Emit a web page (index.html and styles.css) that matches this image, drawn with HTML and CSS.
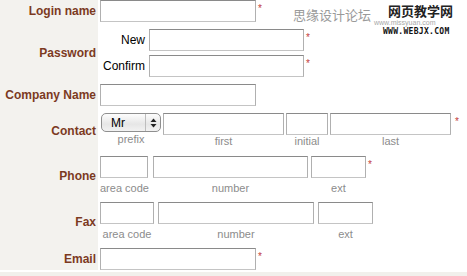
FILE: index.html
```html
<!DOCTYPE html>
<html lang="en">
<head>
    <meta charset="UTF-8">
    <title>Registration</title>
    <link rel="stylesheet" href="styles.css">
</head>
<body>
    <div class="watermark">
        <span class="wm-grey">思缘设计论坛</span>
        <span class="wm-small">www.missyuan.com</span>
        <span class="wm-dark">网页教学网</span>
        <span class="wm-url">WWW.WEBJX.COM</span>
    </div>

    <form class="form">
        <div class="row row-login">
            <div class="label">Login name</div>
            <div class="fields">
                <input class="box w156" type="text"><span class="req">*</span>
            </div>
        </div>

        <div class="row row-password">
            <div class="label">Password</div>
            <div class="sub">
                <div class="subrow">
                    <span class="sublabel">New</span>
                    <input class="box w155" type="password"><span class="req">*</span>
                </div>
                <div class="subrow">
                    <span class="sublabel">Confirm</span>
                    <input class="box w155" type="password"><span class="req">*</span>
                </div>
            </div>
        </div>

        <div class="row row-company">
            <div class="label">Company Name</div>
            <div class="fields">
                <input class="box w156" type="text">
            </div>
        </div>

        <div class="row row-contact">
            <div class="label">Contact</div>
            <div class="fields gap2">
                <div class="group">
                    <div class="select">
                        <span class="select-text">Mr</span>
                        <span class="select-arrows">
                            <svg width="7" height="10" viewBox="0 0 7 10">
                                <path d="M3.5 0.5 L6.5 4 L0.5 4 Z" fill="#222"/>
                                <path d="M0.5 6 L6.5 6 L3.5 9.5 Z" fill="#222"/>
                            </svg>
                        </span>
                    </div>
                    <span class="caption">prefix</span>
                </div>
                <div class="group">
                    <input class="box w121" type="text">
                    <span class="caption">first</span>
                </div>
                <div class="group">
                    <input class="box w42" type="text">
                    <span class="caption">initial</span>
                </div>
                <div class="group">
                    <input class="box w121" type="text">
                    <span class="caption">last</span>
                </div>
                <span class="req">*</span>
            </div>
        </div>

        <div class="row row-phone">
            <div class="label">Phone</div>
            <div class="fields">
                <div class="group">
                    <input class="box w48" type="text">
                    <span class="caption">area code</span>
                </div>
                <div class="group ml4">
                    <input class="box w155" type="text">
                    <span class="caption">number</span>
                </div>
                <div class="group ml3">
                    <input class="box w55" type="text">
                    <span class="caption">ext</span>
                </div>
                <span class="req">*</span>
            </div>
        </div>

        <div class="row row-fax">
            <div class="label">Fax</div>
            <div class="fields">
                <div class="group">
                    <input class="box w54" type="text">
                    <span class="caption">area code</span>
                </div>
                <div class="group ml4">
                    <input class="box w156" type="text">
                    <span class="caption">number</span>
                </div>
                <div class="group ml4">
                    <input class="box w55" type="text">
                    <span class="caption">ext</span>
                </div>
            </div>
        </div>

        <div class="row row-email">
            <div class="label">Email</div>
            <div class="fields">
                <input class="box w156" type="text"><span class="req">*</span>
            </div>
        </div>
    </form>
    <div class="bottom-strip"></div>
</body>
</html>
```

FILE: styles.css
```css
body {
    margin: 0;
    background-color: #fff;
    font-family: 'Liberation Sans', Arial, sans-serif;
    font-size: 12px;
    color: #000;
    overflow: hidden;
}

.form {
    margin: 0;
    background: linear-gradient(to right, #f3f2ee 98px, #fff 98px);
}

.row {
    display: flex;
    align-items: center;
}

.label {
    width: 98px;
    box-sizing: border-box;
    padding-right: 2px;
    text-align: right;
    font-weight: bold;
    color: #7c3a1f;
    flex-shrink: 0;
}

.fields {
    display: flex;
    align-items: flex-start;
    padding-left: 2px;
}

.gap2 {
    gap: 2px;
    padding-left: 3px;
}

.ml3 { margin-left: 3px; }
.ml4 { margin-left: 4px; }

.box {
    display: block;
    box-sizing: border-box;
    height: 22px;
    margin: 0;
    padding: 0 3px;
    border: 1px solid #c4c4c4;
    border-top-color: #8a8a8a;
    border-left-color: #b0b0b0;
    border-right-color: #b0b0b0;
    background: #fff;
    font-family: inherit;
    font-size: 12px;
}

.w42 { width: 42px; }
.w48 { width: 48px; }
.w54 { width: 54px; }
.w55 { width: 55px; }
.w121 { width: 121px; }
.w155 { width: 155px; }
.w156 { width: 156px; }

.req {
    color: #c23b3b;
    font-size: 10px;
    line-height: 10px;
    margin-left: 2px;
    align-self: flex-start;
    padding-top: 4px;
}

.row-password {
    margin-top: 7px;
}

.sub {
    display: flex;
    flex-direction: column;
    gap: 4px;
}

.subrow {
    display: flex;
    align-items: flex-start;
}

.sublabel {
    width: 47px;
    text-align: right;
    margin-right: 4px;
    line-height: 22px;
}

.row-company {
    margin-top: 7px;
}

.row-contact {
    margin-top: 7px;
}

.group {
    display: flex;
    flex-direction: column;
    align-items: center;
}

.caption {
    font-size: 11px;
    color: #8c8c8c;
    line-height: 13px;
}

.select {
    box-sizing: border-box;
    width: 60px;
    height: 19px;
    display: flex;
    align-items: center;
    border: 1px solid #8f8f8f;
    border-radius: 5px;
    background: linear-gradient(to bottom, #fdfdfd, #e6e6e6 60%, #f2f2f2);
    margin-bottom: 1px;
}

.select-text {
    flex: 1;
    padding-left: 9px;
    font-size: 12px;
}

.select-arrows {
    width: 14px;
    height: 100%;
    display: flex;
    align-items: center;
    justify-content: center;
    border-left: 1px solid #bdbdbd;
}

.row-phone {
    margin-top: 8px;
}

.row-phone .caption,
.row-fax .caption {
    margin-top: 4px;
}

.row-fax {
    margin-top: 7px;
}

.row-email {
    margin-top: 7px;
}

.bottom-strip {
    margin-top: 2px;
    height: 10px;
    background-color: #f1f0ec;
}

/* watermark in the top right corner */
.watermark {
    position: absolute;
    left: 292px;
    top: 0;
    width: 175px;
    height: 40px;
}

.wm-grey {
    position: absolute;
    left: 1px;
    top: 6px;
    line-height: 17px;
    font-family: 'Noto Sans CJK SC', sans-serif;
    font-size: 13px;
    color: #9a9a9a;
    white-space: nowrap;
}

.wm-small {
    position: absolute;
    left: 82px;
    top: 19px;
    line-height: 8px;
    font-size: 7px;
    color: #a8a8a8;
    white-space: nowrap;
}

.wm-dark {
    position: absolute;
    left: 96px;
    top: 3px;
    line-height: 16px;
    font-family: 'Noto Sans CJK SC', sans-serif;
    font-size: 13px;
    font-weight: bold;
    color: #222;
    white-space: nowrap;
}

.wm-url {
    position: absolute;
    left: 91px;
    top: 27px;
    line-height: 9px;
    font-family: 'DejaVu Sans Mono', monospace;
    font-size: 8px;
    font-weight: bold;
    color: #111;
    letter-spacing: 0.3px;
}
```
